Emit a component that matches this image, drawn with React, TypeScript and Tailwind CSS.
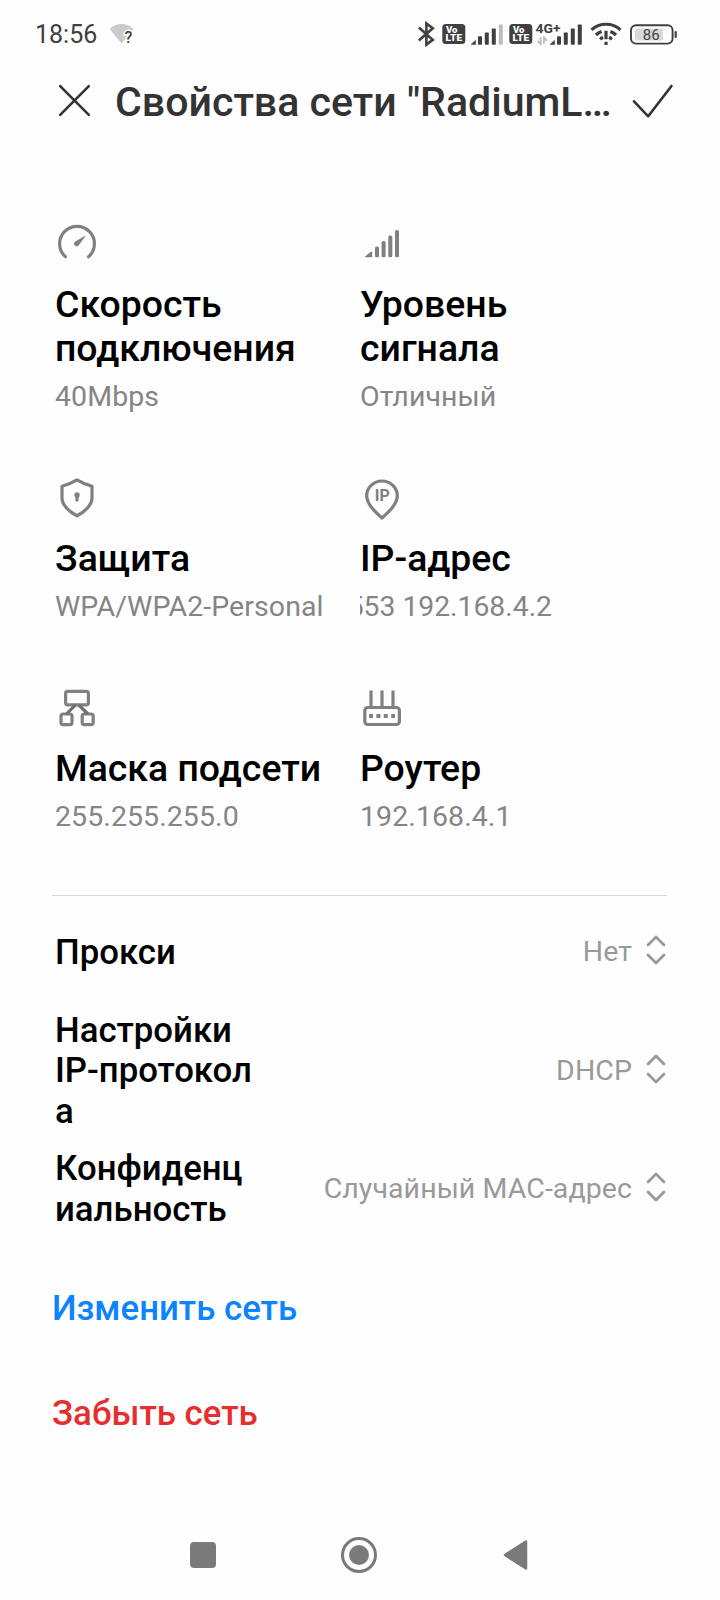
import type { ReactNode } from 'react'

function VolteIcon() {
  return (
    <svg width="24" height="20" viewBox="0 0 24 20" className="shrink-0">
      <rect x="0.3" y="0" width="23" height="20" rx="3.5" fill="#404040" />
      <text x="4" y="9.4" fontSize="9" fontWeight="900" fill="#fefefe" textLength="11.5" lengthAdjust="spacingAndGlyphs">Vo</text>
      <text x="3.6" y="17.4" fontSize="9" fontWeight="900" fill="#fefefe" textLength="16.5" lengthAdjust="spacingAndGlyphs">LTE</text>
    </svg>
  )
}

function SignalIcon({ weak = false }: { weak?: boolean }) {
  return (
    <svg width="32" height="21" viewBox="0 0 32 21" fill="#404040" className="shrink-0">
      <path d="M0 20.5 L4.6 16.2 V20.5 Z" stroke="#404040" strokeWidth="0.5" />
      <rect x="7" y="12.2" width="4" height="8.6" rx="0.8" />
      <rect x="13.8" y="8.5" width="4" height="12.3" rx="0.8" />
      <rect x="20.8" y="4.5" width="4" height="16.3" rx="0.8" />
      <rect x="27.8" y="0.4" width="4" height="20.4" rx="0.8" fill={weak ? '#bcbcbc' : '#404040'} />
    </svg>
  )
}

function StatusBar() {
  return (
    <div className="flex h-[68px] items-center pl-[35px] pr-[43px] text-[#404040]">
      <span className="mt-[2px] text-[25px] leading-[34px]">18:56</span>
      <svg width="30" height="28" viewBox="0 0 30 28" className="ml-[12px]">
        <path d="M0.6 9 C7 2.2 18 2.2 24.6 9 L12.6 23.6 Z" fill="#cbcbcb" />
        <text x="15.6" y="23" fontSize="16" fontWeight="500" fill="#404040" stroke="#fefefe" strokeWidth="3" paintOrder="stroke">?</text>
      </svg>

      <div className="ml-auto flex items-center">
        <svg width="18" height="26" viewBox="0 0 18 26" fill="none" stroke="#404040" strokeWidth="2.6" className="mr-[6px]">
          <path d="M0.8 6.5 L14.8 18.8 L8.4 23.6 V2.4 L14.8 7.3 L0.8 19.5" />
        </svg>
        <VolteIcon />
        <div className="ml-[5px] mr-[6px]">
          <SignalIcon weak />
        </div>
        <VolteIcon />
        <div className="relative ml-[17px] mr-px">
          <SignalIcon />
          <svg width="30" height="30" viewBox="0 0 30 30" className="absolute left-[-15px] top-[-5px]">
            <text x="0.5" y="14.2" fontSize="12.6" fontWeight="700" fill="#404040" textLength="25" lengthAdjust="spacingAndGlyphs">4G+</text>
            <path d="M5.6 18.5 V25 L2.6 21.8 M9 25 V18.5 L12 21.8" fill="none" stroke="#bcbcbc" strokeWidth="1.8" />
          </svg>
        </div>
        <svg width="32" height="24" viewBox="0 0 32 24" fill="none" stroke="#404040" strokeWidth="3.2" className="ml-[7px]">
          <path d="M1.5 7.8 C9.5 0.4 22.5 0.4 30.5 7.8" />
          <path d="M6 13 Q8.5 10.5 11.6 9.4 M20.4 9.4 Q23.5 10.5 26 13" />
          <path d="M10.3 17.4 Q11.4 16 13 15.3 M19 15.3 Q20.6 16 21.7 17.4" />
          <path d="M16 8.8 V17.3 M16 19.8 V23" />
        </svg>
        <svg width="47" height="21" viewBox="0 0 47 21" className="ml-[8px]">
          <rect x="1" y="1.2" width="41.6" height="18.4" rx="5" fill="none" stroke="#404040" strokeWidth="1.9" />
          <rect x="5" y="4.5" width="28" height="12" rx="1.5" fill="#d9d9d9" />
          <rect x="44.6" y="7" width="2.2" height="7" rx="1" fill="#404040" />
          <text x="21.2" y="15.6" fontSize="15" textAnchor="middle" fill="#404040">86</text>
        </svg>
      </div>
    </div>
  )
}

function Header() {
  return (
    <header className="flex h-[66px] items-center pl-[58px] pr-[46px]">
      <svg width="33" height="33" viewBox="0 0 33 33" fill="none" stroke="#333" strokeWidth="2.6" strokeLinecap="round" className="-mt-[2px]">
        <path d="M2.2 2.2 L30.8 30.8 M30.8 2.2 L2.2 30.8" />
      </svg>
      <h1 className="ml-[24px] mt-px whitespace-nowrap text-[41.1px] font-medium leading-[60px] text-[#333]">
        Свойства сети "RadiumL…
      </h1>
      <svg width="42" height="36" viewBox="0 0 42 36" fill="none" stroke="#333" strokeWidth="2.6" strokeLinecap="round" strokeLinejoin="round" className="-mt-px ml-auto shrink-0">
        <path d="M2 18.3 L16.2 33.3 L39.5 3" />
      </svg>
    </header>
  )
}

interface InfoProps {
  icon: ReactNode
  title: string
  value: string
  clipped?: boolean
}

function Info({ icon, title, value, clipped }: InfoProps) {
  return (
    <div>
      <svg width="44" height="44" viewBox="0 0 44 44" fill="none" stroke="#808080" strokeWidth="3.2">
        {icon}
      </svg>
      <h2 className="mt-4 whitespace-pre text-[37.4px] font-medium leading-[44px] text-black">{title}</h2>
      <div
        className={`mt-[10px] flex h-[34px] overflow-hidden whitespace-nowrap leading-[34px] text-[#858585] ${
          clipped ? 'w-[192px] justify-end text-[28.3px]' : 'text-[28.5px] tracking-[0.08px]'
        }`}
      >
        <span>{value}</span>
      </div>
    </div>
  )
}

const INFO: InfoProps[] = [
  {
    title: 'Скорость\nподключения',
    value: '40Mbps',
    icon: (
      <>
        <path d="M10.5 34.8 A17.4 17.4 0 1 1 33.5 34.8" strokeLinecap="round" />
        <path d="M31 13.2 L23.8 23.2 A2.6 2.6 0 1 1 20.2 19.6 Z" fill="#808080" stroke="none" />
      </>
    ),
  },
  {
    title: 'Уровень\nсигнала',
    value: 'Отличный',
    icon: (
      <g fill="#808080" stroke="none">
        <path d="M5 34.4 Q4.6 35.2 5.6 35.2 H12.2 V30.4 Q12 29 10.8 29.8 Z" />
        <rect x="15" y="24.4" width="4" height="10.9" rx="1.6" />
        <rect x="21.6" y="19" width="4" height="16.3" rx="1.6" />
        <rect x="28.3" y="13.4" width="4" height="21.9" rx="1.6" />
        <rect x="35" y="8" width="4" height="27.3" rx="1.6" />
      </g>
    ),
  },
  {
    title: 'Защита',
    value: 'WPA/WPA2-Personal',
    icon: (
      <>
        <path d="M22 3.8 Q29 8 37 10.2 V22 C37 29 29.5 36 22 39.8 C14.5 36 7 29 7 22 V10.2 Q15 8 22 3.8 Z" strokeLinejoin="round" />
        <circle cx="22" cy="19" r="2.7" fill="#808080" stroke="none" />
        <path d="M22 19 V25.4" />
      </>
    ),
  },
  {
    title: 'IP-адрес',
    value: '553 192.168.4.2',
    clipped: true,
    icon: (
      <>
        <path d="M22 42 C16 36.5 6.7 28.5 6.7 19.8 A15.3 14.8 0 0 1 37.3 19.8 C37.3 28.5 28 36.5 22 42 Z" strokeLinejoin="round" />
        <text x="22.3" y="24.8" fontSize="16" fontWeight="700" textAnchor="middle" fill="#808080" stroke="none">IP</text>
      </>
    ),
  },
  {
    title: 'Маска подсети',
    value: '255.255.255.0',
    icon: (
      <>
        <rect x="10.6" y="5.4" width="22.8" height="13.4" rx="2" />
        <rect x="6" y="28" width="11" height="10.6" rx="2" />
        <rect x="27.2" y="28" width="11" height="10.6" rx="2" />
        <path d="M20.5 18.8 L11.5 28 M23.5 18.8 L33 28" stroke="#707070" />
      </>
    ),
  },
  {
    title: 'Роутер',
    value: '192.168.4.1',
    icon: (
      <>
        <rect x="4.8" y="21.5" width="34.6" height="17" rx="3" />
        <path d="M11 4.5 V21 M22 4.5 V21 M33 4.5 V21" strokeLinecap="butt" />
        <path d="M9 30 H35" strokeWidth="3.8" strokeDasharray="4 3.4" />
      </>
    ),
  },
]

const SETTINGS = [
  { label: 'Прокси', value: 'Нет' },
  { label: 'Настройки\nIP-протокол\nа', value: 'DHCP' },
  { label: 'Конфиденц\nиальность', value: 'Случайный MAC-адрес' },
]

export default function App() {
  return (
    <div className="flex h-[1600px] w-[720px] flex-col overflow-hidden bg-[#fefefe] font-['Roboto',sans-serif]">
      <StatusBar />
      <Header />

      <main>
        <div className="mt-[88px] grid grid-cols-[305px_1fr] gap-y-[62px] pl-[55px]">
          {INFO.map((item) => (
            <Info key={item.title} {...item} />
          ))}
        </div>

        <hr className="ml-[52px] mr-[53px] mt-[61px] border-t border-[#d8d8d8]" />

        <div className="-mt-[3px] pl-[55px] pr-[54px]">
          {SETTINGS.map((row) => (
            <div key={row.label} className="flex h-[118.4px] items-center">
              <span className="whitespace-pre text-[34.75px] font-medium leading-[40.7px] text-black">{row.label}</span>
              <span className="ml-auto text-[28.5px] leading-[34px] tracking-[0.08px] text-[#999]">{row.value}</span>
              <svg width="20" height="30" viewBox="0 0 20 30" fill="none" stroke="#999" strokeWidth="2.8" strokeLinecap="round" strokeLinejoin="round" className="-mt-[4px] ml-[14px]">
                <path d="M2 10 L10 2 L18 10 M2 20 L10 28 L18 20" />
              </svg>
            </div>
          ))}
        </div>

        <div className="mt-[8px] flex flex-col items-start pl-[52px] text-[34.8px] font-medium">
          <button className="h-[104px] text-[#0d84ff]">Изменить сеть</button>
          <button className="h-[106px] text-[#e62e2e]">Забыть сеть</button>
        </div>
      </main>

      <nav className="mt-auto flex h-[91px] items-center justify-between pl-[190px] pr-[192px]">
        <span className="size-[26px] rounded-[4px] bg-[#7a7a7a]" />
        <span className="flex size-[36px] items-center justify-center rounded-full border-[3px] border-[#7a7a7a]">
          <span className="size-[20px] rounded-full bg-[#7a7a7a]" />
        </span>
        <svg width="26" height="32" viewBox="0 0 26 32">
          <path d="M3 16 L24 2.5 V29.5 Z" fill="#7a7a7a" stroke="#7a7a7a" strokeWidth="2.5" strokeLinejoin="round" />
        </svg>
      </nav>
    </div>
  )
}
